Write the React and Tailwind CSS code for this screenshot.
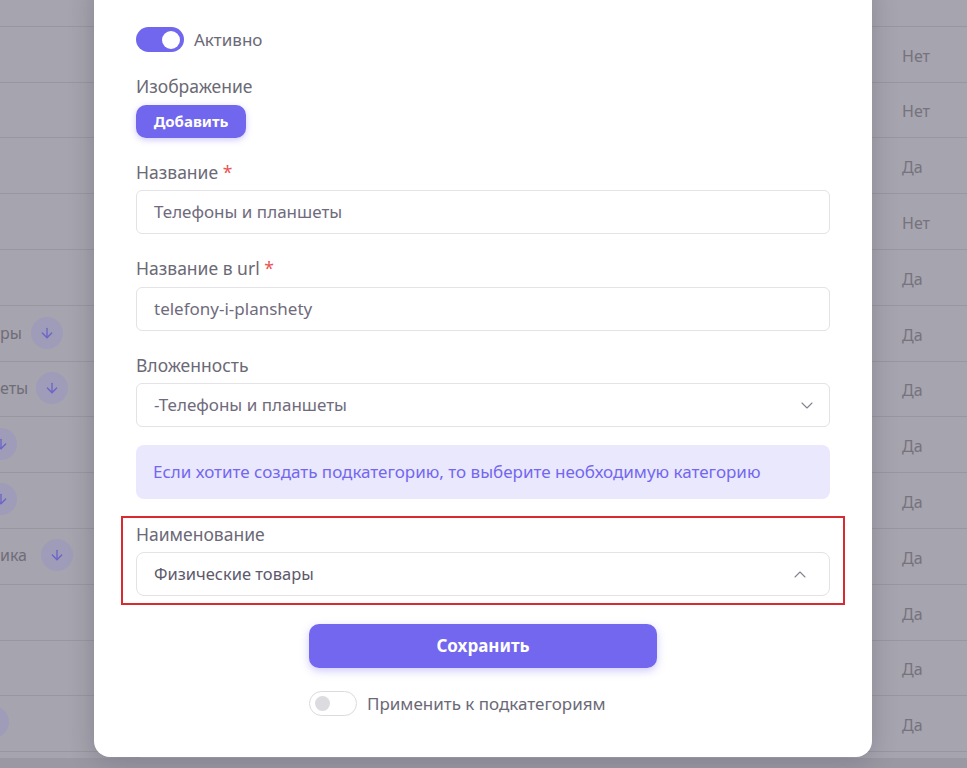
import React from "react";

const rightVals = ["", "Нет", "Нет", "Да", "Нет", "Да", "Да", "Да", "Да", "Да", "Да", "Да", "Да", "Да", ""];

function ArrowCircle({ className }) {
  return (
    <div className={"absolute w-[32px] h-[32px] rounded-full bg-[#9f9cb9] flex items-center justify-center " + className}>
      <svg width="16" height="16" viewBox="0 0 24 24" fill="none" stroke="#6c64c8" strokeWidth="2" strokeLinecap="round" strokeLinejoin="round">
        <path d="M12 5v14" />
        <path d="M19 12l-7 7-7-7" />
      </svg>
    </div>
  );
}

function Chevron({ up }) {
  return (
    <svg width="12" height="7" viewBox="0 0 12 7" fill="none" stroke="#85828f" strokeWidth="1.1" strokeLinecap="round" strokeLinejoin="round">
      {up ? <path d="M1 6L6 1l5 5" /> : <path d="M1 1l5 5 5-5" />}
    </svg>
  );
}

export default function App() {
  const font = { fontFamily: '"Noto Sans", "Open Sans", sans-serif' };
  return (
    <div className="relative w-full h-[768px] overflow-hidden bg-[#a6a4ae]" style={font}>
      {/* background table */}
      <div className="flex flex-col mt-[-29px]">
        {rightVals.map((v, i) => (
          <div key={i} className="h-[55.8px] shrink-0 border-b border-[#98969f] flex items-center justify-end pr-[38px] pt-[3px]">
            <span className="text-[16px] text-[#75737d] w-[27px]">{v}</span>
          </div>
        ))}
      </div>
      <div className="absolute left-0 top-0 w-[140px] h-full bg-gradient-to-r from-transparent via-transparent to-[#8f8d98]/40" />
      <span className="absolute left-0 top-[321px] text-[16px] text-[#6f6d78]">ры</span>
      <span className="absolute left-0 top-[376px] text-[16px] text-[#6f6d78]">еты</span>
      <span className="absolute left-0 top-[543px] text-[16px] text-[#6f6d78]">ика</span>
      <ArrowCircle className="left-[31px] top-[317px]" />
      <ArrowCircle className="left-[36px] top-[372px]" />
      <ArrowCircle className="left-[-15px] top-[428px]" />
      <ArrowCircle className="left-[-15px] top-[483px]" />
      <ArrowCircle className="left-[41px] top-[539px]" />
      <ArrowCircle className="left-[-23px] top-[706px]" />
      <ArrowCircle className="left-[19px] top-[760px]" />
      <div className="absolute left-0 right-0 top-[758px] h-[10px] bg-[#9a98a2]" />

      {/* modal */}
      <div className="absolute left-[94px] top-[-20px] w-[778px] h-[777px] bg-white rounded-[16px] shadow-[0_4px_24px_rgba(60,55,80,0.25)] pl-[42px] pr-[42px] pt-[47px]">
        <div className="flex flex-col">
          <div className="flex items-center gap-[10px] h-[25px]">
            <div className="w-[48px] h-[25px] rounded-full bg-[#7166ee] flex items-center justify-end pr-[4px]">
              <div className="w-[18px] h-[18px] rounded-full bg-white" />
            </div>
            <span className="text-[17px] text-[#6b6976]">Активно</span>
          </div>

          <div className="mt-[22px] h-[24px] leading-[24px] text-[17.5px] text-[#6b6976]">Изображение</div>
          <div className="mt-[7px]">
            <button className="h-[33px] w-[110px] rounded-[10px] bg-[#7166ee] text-white text-[15px] font-bold shadow-[0_2px_6px_rgba(115,103,240,0.35)]">
              Добавить
            </button>
          </div>

          <div className="mt-[22px] h-[24px] leading-[24px] text-[17.5px] text-[#6b6976]">
            Название <span className="text-[#ea5455]">*</span>
          </div>
          <div className="mt-[6px] h-[44px] rounded-[6px] border border-[#e3e2e6] flex items-center px-[17px] text-[17px] text-[#6f6b7d]">
            Телефоны и планшеты
          </div>

          <div className="mt-[22px] h-[24px] leading-[24px] text-[17.5px] text-[#6b6976]">
            Название в url <span className="text-[#ea5455]">*</span>
          </div>
          <div className="mt-[7px] h-[44px] rounded-[6px] border border-[#e3e2e6] flex items-center px-[17px] text-[17px] text-[#6f6b7d]">
            telefony-i-planshety
          </div>

          <div className="mt-[22px] h-[24px] leading-[24px] text-[17.5px] text-[#6b6976]">Вложенность</div>
          <div className="mt-[6px] h-[44px] rounded-[6px] border border-[#e3e2e6] flex items-center justify-between pl-[17px] pr-[16px] text-[17px] text-[#6f6b7d]">
            <span>-Телефоны и планшеты</span>
            <Chevron />
          </div>

          <div className="mt-[18px] h-[54px] rounded-[8px] bg-[#eae8fc] flex items-center px-[17px] text-[17px] text-[#7367f0]">
            Если хотите создать подкатегорию, то выберите необходимую категорию
          </div>

          <div className="mt-[17px] mx-[-15px] border-2 border-[#d92a2f] pt-[4px] pb-[7px] px-[13px]">
            <div className="h-[24px] leading-[24px] text-[17.5px] text-[#6b6976]">Наименование</div>
            <div className="mt-[6px] h-[44px] rounded-[8px] border border-[#e3e2e6] flex items-center justify-between pl-[17px] pr-[23px] text-[16.5px] text-[#5d596c]">
              <span>Физические товары</span>
              <Chevron up />
            </div>
          </div>

          <div className="mt-[19px] w-[348px] mx-auto flex flex-col">
            <button className="h-[44px] w-full rounded-[10px] bg-[#7367f0] text-white text-[17px] font-bold shadow-[0_3px_8px_rgba(115,103,240,0.35)]">
              Сохранить
            </button>
            <div className="mt-[23px] flex items-center gap-[10px] h-[25px]">
              <div className="w-[48px] h-[25px] rounded-full bg-white border border-[#dbdade] flex items-center pl-[5px]">
                <div className="w-[15px] h-[15px] rounded-full bg-[#dcdce0]" />
              </div>
              <span className="text-[17px] text-[#6b6976]">Применить к подкатегориям</span>
            </div>
          </div>
        </div>
      </div>
    </div>
  );
}
